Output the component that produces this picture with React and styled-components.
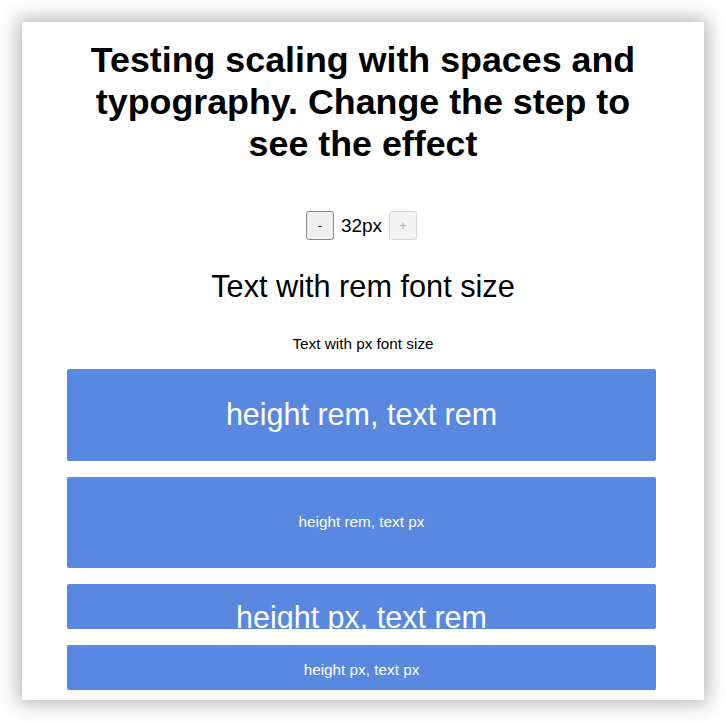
import React, { useState } from "react";
import styled, { createGlobalStyle } from "styled-components";

const GlobalStyle = createGlobalStyle`
  html, body {
    margin: 0;
    padding: 0;
    background: #ffffff;
  }
  body {
    font-family: "Liberation Sans", Arial, sans-serif;
    color: #000;
  }
`;

const Page = styled.div`
  padding: 22px;
  width: 726px;
  height: 722px;
  box-sizing: border-box;
`;

const Card = styled.main`
  background: #fff;
  height: 678px;
  box-shadow: 0 0 18px 4px rgba(0, 0, 0, 0.28);
  padding-top: 17px;
  box-sizing: border-box;
  overflow: hidden;
`;

const Heading = styled.h1`
  margin: 0 auto;
  width: 560px;
  font-size: 35.8px;
  line-height: 42px;
  font-weight: bold;
  text-align: center;
`;

const Stepper = styled.div`
  display: flex;
  justify-content: center;
  align-items: center;
  gap: 7px;
  margin-top: 46px;
  margin-right: 3px;
`;

const StepButton = styled.button`
  width: 28px;
  height: 29px;
  padding: 0;
  font-family: "Liberation Sans", Arial, sans-serif;
  font-size: 13px;
  border-radius: 3px;
  border: 1px solid ${(p) => (p.disabled ? "#d8d8d8" : "#8a8a8a")};
  background: ${(p) => (p.disabled ? "#f4f4f4" : "#efefef")};
  color: ${(p) => (p.disabled ? "#b5b5b5" : "#111")};
`;

const StepValue = styled.span`
  font-size: 19px;
`;

const RemText = styled.h2`
  margin: 28px 0 0;
  font-size: 30.7px;
  line-height: 38px;
  font-weight: normal;
  text-align: center;
`;

const PxText = styled.p`
  margin: 29px 0 0;
  font-size: 15.3px;
  line-height: 18px;
  text-align: center;
`;

const Boxes = styled.div`
  margin: 16px 48px 0 45px;
  display: flex;
  flex-direction: column;
  gap: 16px;
`;

const Box = styled.div`
  background: #5988e1;
  color: #fff;
  border-radius: 2px;
  height: ${(p) => p.$height}px;
  box-sizing: border-box;
  overflow: hidden;
  text-align: center;
  font-size: ${(p) => p.$size}px;
  ${(p) =>
    p.$centered
      ? "display: flex; align-items: center; justify-content: center;"
      : "padding-top: 16px; line-height: 1.15;"}
`;

export default function App() {
  const [step] = useState(32);
  return (
    <Page>
      <GlobalStyle />
      <Card>
        <Heading>
          Testing scaling with spaces and typography. Change the step to see the
          effect
        </Heading>
        <Stepper>
          <StepButton>-</StepButton>
          <StepValue>{step}px</StepValue>
          <StepButton disabled>+</StepButton>
        </Stepper>
        <RemText>Text with rem font size</RemText>
        <PxText>Text with px font size</PxText>
        <Boxes>
          <Box $height={91.5} $size={30.5} $centered>
            height rem, text rem
          </Box>
          <Box $height={91.5} $size={15.3} $centered>
            height rem, text px
          </Box>
          <Box $height={45} $size={30.5}>
            height px, text rem
          </Box>
          <Box $height={45} $size={15.3}>
            height px, text px
          </Box>
        </Boxes>
      </Card>
    </Page>
  );
}
